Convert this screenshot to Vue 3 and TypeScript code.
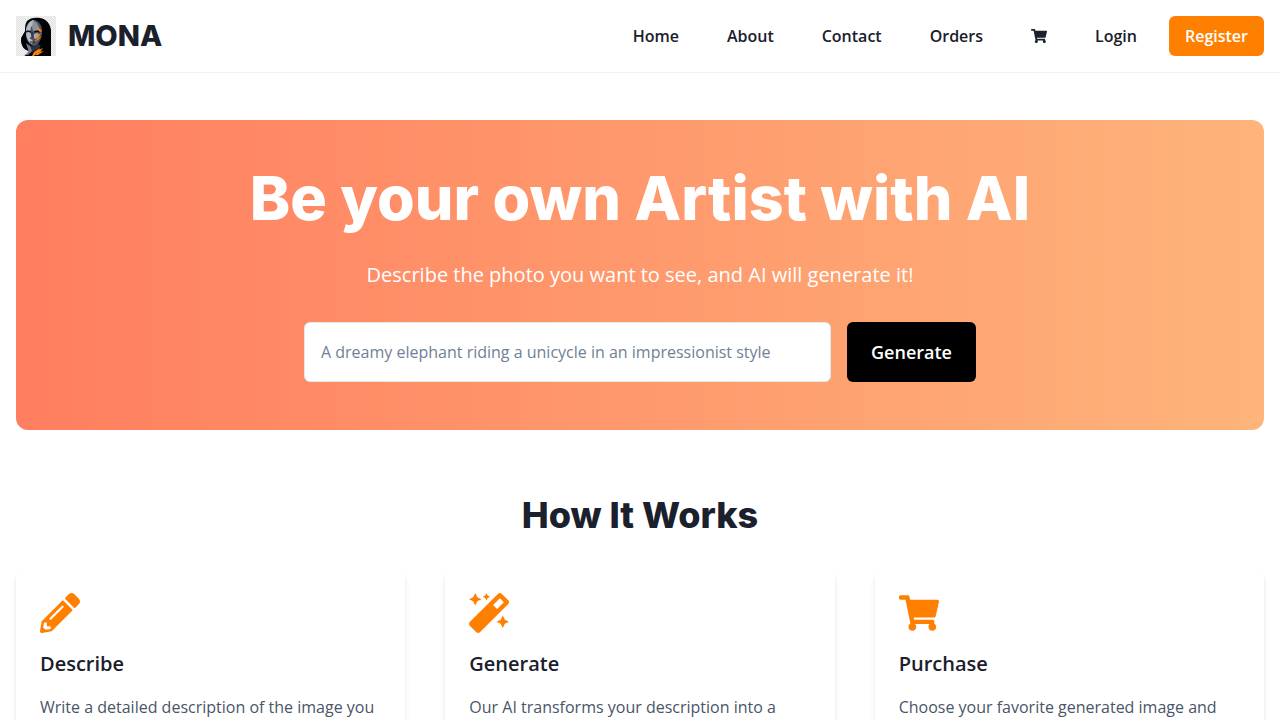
<script setup lang="ts">
import { ref } from 'vue'

interface Icon {
  viewBox: string
  path: string
}

interface Step {
  title: string
  text: string
  icon: Icon
}

const cart: Icon = {
  viewBox: '0 0 576 512',
  path: 'M528.12 301.319l47.273-208C578.806 78.301 567.391 64 551.99 64H159.208l-9.166-44.81C147.758 8.021 137.93 0 126.529 0H24C10.745 0 0 10.745 0 24v16c0 13.255 10.745 24 24 24h69.883l70.248 343.435C147.325 417.1 136 435.222 136 456c0 30.928 25.072 56 56 56s56-25.072 56-56c0-15.674-6.447-29.835-16.824-40h209.647C430.447 426.165 424 440.326 424 456c0 30.928 25.072 56 56 56s56-25.072 56-56c0-22.172-12.888-41.332-31.579-50.405l5.517-24.276c3.413-15.018-8.002-29.319-23.403-29.319H218.117l-6.545-32h293.145c11.206 0 20.92-7.754 23.403-18.681z',
}

const pencil: Icon = {
  viewBox: '0 0 512 512',
  path: 'M497.9 142.1l-46.1 46.1c-4.7 4.7-12.3 4.7-17 0l-111-111c-4.7-4.7-4.7-12.3 0-17l46.1-46.1c18.7-18.7 49.1-18.7 67.9 0l60.1 60.1c18.8 18.7 18.8 49.1 0 67.9zM284.2 99.8L21.6 362.4.4 483.9c-2.9 16.4 11.4 30.6 27.8 27.8l121.5-21.3 262.6-262.6c4.7-4.7 4.7-12.3 0-17l-111-111c-4.8-4.7-12.4-4.7-17.1 0zM124.1 339.9c-5.5-5.5-5.5-14.3 0-19.8l154-154c5.5-5.5 14.3-5.5 19.8 0s5.5 14.3 0 19.8l-154 154c-5.5 5.5-14.3 5.5-19.8 0zM88 424h48v36.3l-64.5 11.3-31.1-31.1L51.7 376H88v48z',
}

const wand: Icon = {
  viewBox: '0 0 512 512',
  path: 'M224 96l16-32 32-16-32-16-16-32-16 32-32 16 32 16 16 32zM80 160l26.66-53.33L160 80l-53.34-26.67L80 0 53.34 53.33 0 80l53.34 26.67L80 160zm352 128l-26.66 53.33L352 368l53.34 26.67L432 448l26.66-53.33L512 368l-53.34-26.67L432 288zm70.62-193.77L417.77 9.38C411.53 3.12 403.34 0 395.15 0c-8.19 0-16.38 3.12-22.63 9.38L9.38 372.52c-12.5 12.5-12.5 32.76 0 45.25l84.85 84.85c6.25 6.25 14.44 9.37 22.62 9.37 8.19 0 16.38-3.12 22.63-9.37l363.14-363.15c12.5-12.48 12.5-32.75 0-45.24zM359.45 203.46l-50.91-50.91 86.6-86.6 50.91 50.91-86.6 86.6z',
}

const links: string[] = ['Home', 'About', 'Contact', 'Orders']

const steps: Step[] = [
  { title: 'Describe', text: 'Write a detailed description of the image you', icon: pencil },
  { title: 'Generate', text: 'Our AI transforms your description into a', icon: wand },
  { title: 'Purchase', text: 'Choose your favorite generated image and', icon: cart },
]

const prompt = ref('')
</script>

<template>
  <div class="page">
    <header class="header">
      <a class="brand" href="#">
        <svg class="logo" viewBox="0 0 40 40" aria-hidden="true">
          <defs>
            <pattern id="checks" width="2" height="2" patternUnits="userSpaceOnUse">
              <rect width="2" height="2" fill="#f3f3f3" />
              <rect width="1" height="1" fill="#e2e2e2" />
              <rect x="1" y="1" width="1" height="1" fill="#e2e2e2" />
            </pattern>
          </defs>
          <rect width="40" height="40" fill="url(#checks)" />
          <path d="M11 5C14 2 19 1 24 2c6 1 10 5 11 12v26H8c3-1 5-3 5-5-5-1-8-5-8-11 0-4 3-6 4-9 0-4 0-7 2-10z" fill="#020305" />
          <path d="M10 12c1-4 4-8 8-8 5 1 8 5 8 11 0 6-2 11-5 14-2 2-5 1-7-1-3-3-4-6-4-9z" fill="#4d5361" />
          <path d="M10 14c1-5 3-9 8-10l-1 5-2 2-1 5 2 5-1 2 2 2-1 3-3-2c-2-3-3-6-3-9z" fill="#b4b9c2" />
          <path d="M17 5l3 1 3 5-1 4-4 1-2-4z" fill="#8b919d" />
          <path d="M18 18l4-1 1 3-3 3-2-1z" fill="#a5abb5" />
          <path d="M10 16l2-1 3 1M18 16l3-1 3 1" fill="none" stroke="#0b101a" stroke-width="1.4" />
          <path d="M16 16v6h-2M14 26h5" fill="none" stroke="#1c2330" stroke-width="1" />
          <path d="M13 29c3 2 6 2 9-1l3 2-3 3-6 3-5 3h-2c4-2 5-5 4-10z" fill="#2c3443" />
          <path d="M10 27l4 3 2 5-4 4h-3c3-2 4-4 3-6z" fill="#777e8c" />
          <path d="M22 11l4 4-2 1-2-2zM25 17l-2 4-4 2 3-4zM26 20l-4 4-4 2 4-4z" fill="#ff830f" />
          <path d="M27 32l-9 4-1 3 7-3zM28 35l-6 4h-3l4-3zM24 32l-6 4-2 4h2l4-4z" fill="#ff830f" />
        </svg>
        <span class="brand-name">MONA</span>
      </a>
      <nav class="nav">
        <a v-for="link in links" :key="link" class="nav-link" href="#">{{ link }}</a>
        <a class="nav-link cart-link" href="#" aria-label="Cart">
          <svg class="cart-icon" :viewBox="cart.viewBox" aria-hidden="true">
            <path :d="cart.path" fill="currentColor" />
          </svg>
        </a>
        <div class="account">
          <a class="nav-link" href="#">Login</a>
          <button class="register" type="button">Register</button>
        </div>
      </nav>
    </header>

    <main class="main">
      <section class="hero">
        <h1 class="hero-title">Be your own Artist with AI</h1>
        <p class="hero-text">Describe the photo you want to see, and AI will generate it!</p>
        <form class="prompt-form" @submit.prevent>
          <input
            v-model="prompt"
            class="prompt-input"
            type="text"
            aria-label="Image description"
            placeholder="A dreamy elephant riding a unicycle in an impressionist style"
          />
          <button class="generate" type="submit">Generate</button>
        </form>
      </section>

      <section class="works">
        <h2 class="works-title">How It Works</h2>
        <div class="cards">
          <article v-for="step in steps" :key="step.title" class="card">
            <svg class="card-icon" :viewBox="step.icon.viewBox" aria-hidden="true">
              <path :d="step.icon.path" fill="currentColor" />
            </svg>
            <h3 class="card-title">{{ step.title }}</h3>
            <p class="card-text">{{ step.text }}</p>
          </article>
        </div>
      </section>
    </main>
  </div>
</template>

<style>
body {
  margin: 0;
  background: #fff;
}
</style>

<style scoped>
.page {
  height: 100vh;
  overflow: hidden;
  color: #1a202c;
  font-family: 'Open Sans', 'Noto Sans', sans-serif;
  font-size: 16px;
  line-height: 24px;
}

.page * {
  box-sizing: border-box;
}

.header {
  display: flex;
  align-items: center;
  justify-content: space-between;
  padding: 16px;
  border-bottom: 1px solid #f0f0f0;
}

.brand {
  display: flex;
  align-items: center;
  gap: 12px;
  color: inherit;
  text-decoration: none;
}

.logo {
  width: 40px;
  height: 40px;
}

.brand-name {
  font-family: Inter, sans-serif;
  font-size: 29px;
  font-weight: 800;
  line-height: 40px;
}

.nav {
  display: flex;
  align-items: center;
  gap: 48px;
}

.nav-link {
  color: inherit;
  font-weight: 600;
  text-decoration: none;
}

.cart-link {
  display: flex;
}

.cart-icon {
  width: 16px;
  height: 16px;
}

.account {
  display: flex;
  align-items: center;
  gap: 32px;
}

.register,
.generate {
  border: 0;
  border-radius: 6px;
  color: #fff;
  font-family: inherit;
  font-weight: 600;
  cursor: pointer;
}

.register {
  height: 40px;
  padding: 0 16px;
  background: #ff8000;
  font-size: 16px;
}

.main {
  padding: 47px 16px 0;
}

.hero {
  padding: 48px 16px;
  border-radius: 12px;
  background: linear-gradient(to right, #ff7e5f, #feb47b);
  color: #fff;
  text-align: center;
}

.hero-title {
  margin: 0 0 32px;
  font-family: Inter, sans-serif;
  font-size: 61px;
  font-weight: 800;
  line-height: 60px;
}

.hero-text {
  margin: 0 0 32px;
  font-size: 20px;
  line-height: 30px;
}

.prompt-form {
  display: flex;
  gap: 16px;
  max-width: 672px;
  margin: 0 auto;
}

.prompt-input {
  flex: 1;
  min-width: 0;
  height: 60px;
  padding: 0 16px;
  border: 1px solid #e2e8f0;
  border-radius: 6px;
  background: #fff;
  color: #1a202c;
  font-family: inherit;
  font-size: 16px;
}

.prompt-input::placeholder {
  color: #718096;
  opacity: 1;
}

.generate {
  padding: 0 24px;
  background: #000;
  font-size: 18px;
}

.works {
  padding-top: 64px;
}

.works-title {
  margin: 0 0 32px;
  font-family: Inter, sans-serif;
  font-size: 36px;
  font-weight: 800;
  line-height: 43px;
  text-align: center;
}

.cards {
  display: grid;
  grid-template-columns: repeat(3, 1fr);
  gap: 40px;
}

.card {
  padding: 24px;
  border-radius: 8px;
  background: #fff;
  box-shadow: 0 4px 6px -1px rgba(0, 0, 0, 0.1), 0 2px 4px -1px rgba(0, 0, 0, 0.06);
}

.card-icon {
  display: block;
  width: 40px;
  height: 40px;
  color: #ff8000;
}

.card-title {
  margin: 16px 0;
  font-size: 20px;
  font-weight: 600;
  line-height: 30px;
}

.card-text {
  margin: 0;
  color: #4a5568;
}
</style>
